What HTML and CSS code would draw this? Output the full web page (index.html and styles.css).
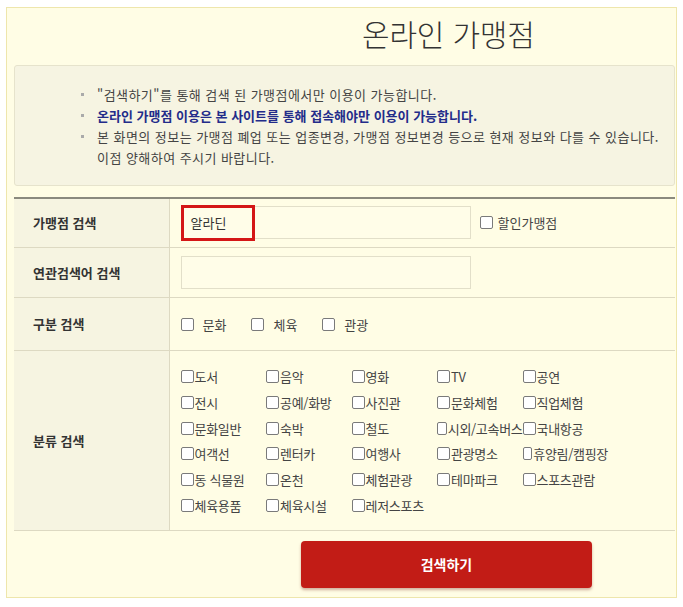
FILE: index.html
```html
<!DOCTYPE html>
<html lang="ko">
<head>
    <meta charset="UTF-8">
    <meta name="viewport" content="width=device-width, initial-scale=1.0">
    <title>온라인 가맹점</title>
    <link rel="stylesheet" href="styles.css">
</head>
<body>
    <div class="container">
        <h1 class="page-title">온라인 가맹점</h1>

        <div class="notice">
            <ul>
                <li>"검색하기"를 통해 검색 된 가맹점에서만 이용이 가능합니다.</li>
                <li class="strong">온라인 가맹점 이용은 본 사이트를 통해 접속해야만 이용이 가능합니다.</li>
                <li>본 화면의 정보는 가맹점 폐업 또는 업종변경, 가맹점 정보변경 등으로 현재 정보와 다를 수 있습니다.<br>이점 양해하여 주시기 바랍니다.</li>
            </ul>
        </div>

        <table class="search-table">
            <tr class="row-store">
                <th>가맹점 검색</th>
                <td>
                    <div class="field-line">
                        <div class="text-field">
                            <span class="typed">알라딘</span>
                            <span class="highlight"></span>
                        </div>
                        <label class="check"><input type="checkbox"> 할인가맹점</label>
                    </div>
                </td>
            </tr>
            <tr class="row-keyword">
                <th>연관검색어 검색</th>
                <td>
                    <div class="text-field"></div>
                </td>
            </tr>
            <tr class="row-type">
                <th>구분 검색</th>
                <td>
                    <div class="type-list">
                        <label class="check"><input type="checkbox"> 문화</label>
                        <label class="check"><input type="checkbox"> 체육</label>
                        <label class="check"><input type="checkbox"> 관광</label>
                    </div>
                </td>
            </tr>
            <tr class="row-category">
                <th>분류 검색</th>
                <td>
                    <div class="category-grid">
                        <label class="check"><input type="checkbox">도서</label>
                        <label class="check"><input type="checkbox">음악</label>
                        <label class="check"><input type="checkbox">영화</label>
                        <label class="check"><input type="checkbox">TV</label>
                        <label class="check"><input type="checkbox">공연</label>
                        <label class="check"><input type="checkbox">전시</label>
                        <label class="check"><input type="checkbox">공예/화방</label>
                        <label class="check"><input type="checkbox">사진관</label>
                        <label class="check"><input type="checkbox">문화체험</label>
                        <label class="check"><input type="checkbox">직업체험</label>
                        <label class="check"><input type="checkbox">문화일반</label>
                        <label class="check"><input type="checkbox">숙박</label>
                        <label class="check"><input type="checkbox">철도</label>
                        <label class="check"><input type="checkbox">시외/고속버스</label>
                        <label class="check"><input type="checkbox">국내항공</label>
                        <label class="check"><input type="checkbox">여객선</label>
                        <label class="check"><input type="checkbox">렌터카</label>
                        <label class="check"><input type="checkbox">여행사</label>
                        <label class="check"><input type="checkbox">관광명소</label>
                        <label class="check"><input type="checkbox">휴양림/캠핑장</label>
                        <label class="check"><input type="checkbox">동 식물원</label>
                        <label class="check"><input type="checkbox">온천</label>
                        <label class="check"><input type="checkbox">체험관광</label>
                        <label class="check"><input type="checkbox">테마파크</label>
                        <label class="check"><input type="checkbox">스포츠관람</label>
                        <label class="check"><input type="checkbox">체육용품</label>
                        <label class="check"><input type="checkbox">체육시설</label>
                        <label class="check"><input type="checkbox">레저스포츠</label>
                    </div>
                </td>
            </tr>
        </table>

        <div class="actions">
            <button type="button" class="search-button">검색하기</button>
        </div>
    </div>
</body>
</html>
```

FILE: styles.css
```css
body {
    font-family: "Noto Sans CJK KR", "Noto Sans", sans-serif;
    margin: 0;
    background-color: white;
    color: #333;
}
.container {
    margin: 7px 6px 8px 6px;
    padding: 0 1px 0 7px;
    height: 591px;
    box-sizing: border-box;
    background-color: #fffde5;
    border: 1px solid #eee6ac;
}
.page-title {
    margin: 0;
    height: 57px;
    padding-left: 348px;
    font-size: 30px;
    font-weight: 300;
    line-height: 50px;
    color: #333;
    letter-spacing: -0.2px;
}
.notice {
    height: 121px;
    box-sizing: border-box;
    background-color: #f6f4e2;
    border: 1px solid #e6e3cc;
    border-radius: 3px;
    padding: 18px 0 0 82px;
}
.notice ul {
    list-style: none;
    margin: 0;
    padding: 0;
}
.notice li {
    position: relative;
    font-size: 13px;
    line-height: 21px;
    letter-spacing: 0.45px;
    color: #444;
    white-space: nowrap;
}
.notice li::before {
    content: "";
    position: absolute;
    left: -16px;
    top: 9px;
    width: 3px;
    height: 3px;
    background-color: #aaa;
}
.notice li.strong {
    color: #232c8a;
    font-weight: bold;
    letter-spacing: 0;
}
.search-table {
    width: 100%;
    margin-top: 11px;
    border-collapse: collapse;
    border-top: 2px solid #8b8a7e;
}
.search-table th {
    width: 155px;
    padding: 0 0 0 19px;
    text-align: left;
    font-size: 13px;
    font-weight: bold;
    color: #333;
    background-color: #f6f4e1;
    border-right: 1px solid #ddd9c2;
    border-bottom: 1px solid #ddd9c2;
    box-sizing: border-box;
}
.search-table td {
    padding: 0 0 0 11px;
    border-bottom: 1px solid #ddd9c2;
    font-size: 13px;
}
.row-store { height: 49px; }
.row-keyword { height: 50px; }
.row-type { height: 53px; }
.row-category { height: 180px; }

.field-line {
    display: flex;
    align-items: center;
    gap: 9px;
}
.text-field {
    position: relative;
    width: 290px;
    height: 33px;
    box-sizing: border-box;
    border: 1px solid #e2dfc9;
    background-color: #fffde8;
    display: flex;
    align-items: center;
    padding-left: 9px;
}
.typed {
    font-size: 13px;
    color: #333;
}
.highlight {
    position: absolute;
    left: -1px;
    top: -2px;
    width: 74px;
    height: 36px;
    box-sizing: border-box;
    border: 3px solid #d41616;
}
.check {
    display: inline-flex;
    align-items: center;
    font-size: 13px;
    color: #444;
    white-space: nowrap;
}
.check input {
    appearance: none;
    -webkit-appearance: none;
    width: 13px;
    height: 13px;
    margin: 0 1px 0 0;
    border: 1px solid #7a7a7a;
    border-radius: 2px;
    background-color: white;
    box-sizing: border-box;
}
.field-line .check input {
    margin-right: 5px;
}
.type-list .check input {
    margin-right: 9px;
}
.type-list {
    display: flex;
    gap: 25px;
    padding-top: 2px;
}
.category-grid {
    display: grid;
    grid-template-columns: repeat(5, 85.5px);
    grid-auto-rows: 25.8px;
    align-items: center;
    padding-top: 2px;
    letter-spacing: -0.3px;
}
.actions {
    padding: 10px 0 0 287px;
}
.search-button {
    width: 291px;
    height: 47px;
    border: none;
    border-radius: 4px;
    background-color: #c21c16;
    color: white;
    font-family: inherit;
    font-size: 14px;
    font-weight: bold;
    box-shadow: 0 2px 3px rgba(120, 30, 20, 0.35);
}
```
